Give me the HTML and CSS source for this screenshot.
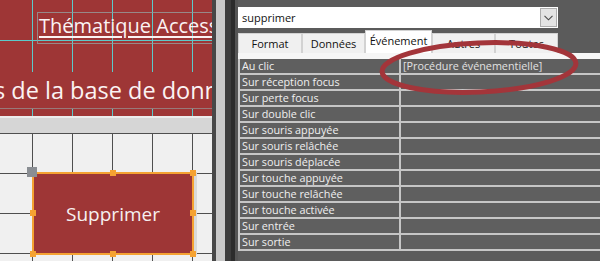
FILE: index.html
```html
<!DOCTYPE html>
<html lang="fr">
<head>
<meta charset="utf-8">
<title>Feuille de propriétés</title>
<link rel="stylesheet" href="styles.css">
</head>
<body>
<div class="app">
  <section class="design">
    <div class="form-header">
      <div class="label label-title"><span class="u">Thématique Access</span></div>
      <div class="label label-sub">s de la base de données</div>
    </div>
    <div class="section-bar"></div>
    <div class="detail">
      <div class="control">
        <div class="btn">Supprimer</div>
        <span class="move-handle"></span>
        <span class="h h-tc"></span><span class="h h-tr"></span>
        <span class="h h-ml"></span><span class="h h-mr"></span>
        <span class="h h-bl"></span><span class="h h-bc"></span><span class="h h-br"></span>
      </div>
    </div>
  </section>

  <div class="splitter">
    <span class="sp sp1"></span><span class="sp sp2"></span><span class="sp sp3"></span><span class="sp sp4"></span><span class="sp sp5"></span>
  </div>

  <section class="props">
    <div class="combo">
      <span class="combo-text">supprimer</span>
      <span class="combo-btn"><svg width="9" height="6" viewBox="0 0 9 6"><path d="M0.5 0.8 L4.5 4.8 L8.5 0.8" fill="none" stroke="#4a4a4a" stroke-width="1.1"/></svg></span>
    </div>
    <div class="tabs">
      <span class="tab t-format">Format</span>
      <span class="tab t-donnees">Données</span>
      <span class="tab t-event active">Événement</span>
      <span class="tab t-autres">Autres</span>
      <span class="tab t-toutes">Toutes</span>
    </div>
    <div class="tab-top"></div>
    <div class="grid">
      <div class="row"><span class="name">Au clic</span><span class="value">[Procédure événementielle]</span></div>
      <div class="row"><span class="name">Sur réception focus</span><span class="value"></span></div>
      <div class="row"><span class="name">Sur perte focus</span><span class="value"></span></div>
      <div class="row"><span class="name">Sur double clic</span><span class="value"></span></div>
      <div class="row"><span class="name">Sur souris appuyée</span><span class="value"></span></div>
      <div class="row"><span class="name">Sur souris relâchée</span><span class="value"></span></div>
      <div class="row"><span class="name">Sur souris déplacée</span><span class="value"></span></div>
      <div class="row"><span class="name">Sur touche appuyée</span><span class="value"></span></div>
      <div class="row"><span class="name">Sur touche relâchée</span><span class="value"></span></div>
      <div class="row"><span class="name">Sur touche activée</span><span class="value"></span></div>
      <div class="row"><span class="name">Sur entrée</span><span class="value"></span></div>
      <div class="row"><span class="name">Sur sortie</span><span class="value"></span></div>
    </div>
    <svg class="mark" width="362" height="120" viewBox="0 0 362 120">
      <ellipse cx="241" cy="67.5" rx="97" ry="24.5" transform="rotate(-2.5 241 67.5)" fill="none" stroke="#a3353a" stroke-width="5"/>
    </svg>
  </section>
</div>
</body>
</html>
```

FILE: styles.css
```css
* { box-sizing: border-box; }

html, body {
  margin: 0;
  padding: 0;
  width: 600px;
  height: 261px;
  overflow: hidden;
  background: #5d5d5d;
  font-family: "Open Sans", "Noto Sans", sans-serif;
}

.app {
  display: flex;
  width: 600px;
  height: 261px;
}

/* ---------- Form design surface ---------- */
.design {
  width: 212px;
  flex: none;
  display: flex;
  flex-direction: column;
  overflow: hidden;
}

.form-header {
  height: 116px;
  flex: none;
  overflow: hidden;
  background-color: #9e3636;
  background-image:
    linear-gradient(#5cc9c9, #5cc9c9),
    linear-gradient(#5cc9c9, #5cc9c9),
    linear-gradient(to right, #5cc9c9 1px, transparent 1px);
  background-size: 100% 1px, 100% 1px, 40px 100%;
  background-position: 0 40px, 0 72px, 32px 0;
  background-repeat: no-repeat, no-repeat, repeat-x;
  display: flex;
  flex-direction: column;
}

.label {
  white-space: nowrap;
  color: #fbf3f3;
}

.label-title {
  margin: 12px 0 0 37px;
  width: 240px;
  height: 32px;
  border: 1px solid rgba(150, 150, 150, 0.85);
  border-right: none;
  font-size: 20px;
  line-height: 25px;
  padding-left: 1px;
}

.label-title .u {
  text-decoration: underline;
  text-decoration-thickness: 1.5px;
  text-underline-offset: 3px;
}

.label-sub {
  margin-top: 28px;
  height: 37px;
  background: #9e3636;
  border-bottom: 1px solid rgba(150, 150, 150, 0.7);
  font-size: 23.5px;
  line-height: 36px;
  text-indent: -6px;
}

.section-bar {
  height: 17px;
  flex: none;
  background: #d6d6d6;
  border-top: 2px solid #ececec;
}

.detail {
  flex: 1;
  position: relative;
  background-color: #f0f0f0;
  background-image:
    linear-gradient(to right, #4f4f4f 1px, transparent 1px),
    linear-gradient(to bottom, #4f4f4f 1px, transparent 1px);
  background-size: 40px 100%, 100% 40px;
  background-position: 32px 0, 0 0;
}

.control {
  position: absolute;
  left: 32px;
  top: 39px;
  width: 162px;
  height: 83px;
}

.btn {
  width: 100%;
  height: 100%;
  background: #9e3636;
  border: 2px solid #f5a232;
  box-shadow: 3px 0 0 #d9d9d9;
  color: #f6f0f0;
  font-size: 19px;
  display: flex;
  align-items: center;
  justify-content: center;
}

.move-handle {
  position: absolute;
  left: -5px;
  top: -5px;
  width: 10px;
  height: 10px;
  background: #8a8e93;
}

.h {
  position: absolute;
  width: 6px;
  height: 6px;
  background: #f5a232;
}
.h-tc { left: 78px; top: -2px; }
.h-tr { right: -2px; top: -2px; }
.h-ml { left: -2px; top: 38px; }
.h-mr { right: -2px; top: 38px; }
.h-bl { left: -2px; bottom: -2px; }
.h-bc { left: 78px; bottom: -2px; }
.h-br { right: -2px; bottom: -2px; }

/* ---------- Splitter ---------- */
.splitter {
  display: flex;
  flex: none;
}
.sp { display: block; height: 100%; }
.sp1 { width: 4px; background: #474747; }
.sp2 { width: 9px; background: #c9c9c9; }
.sp3 { width: 6px; background: #3c3c3c; }
.sp4 { width: 4px; background: #2c2c2c; }
.sp5 { width: 3px; background: #555555; }

/* ---------- Property sheet ---------- */
.props {
  position: relative;
  flex: 1;
  background: #5b5b5b;
  padding-top: 7px;
  display: flex;
  flex-direction: column;
  font-size: 10.8px;
}

.combo {
  width: 320px;
  height: 21px;
  background: #ffffff;
  display: flex;
  align-items: center;
  justify-content: space-between;
  padding: 0 1px 0 4px;
  color: #111;
  font-size: 11px;
}

.combo-btn {
  width: 17px;
  height: 19px;
  background: #e4e4e4;
  border: 1px solid #adadad;
  display: flex;
  align-items: center;
  justify-content: center;
}

.tabs {
  margin-top: 2px;
  height: 23px;
  display: flex;
  align-items: flex-end;
  font-size: 11px;
}

.tab {
  height: 20px;
  background: #f0f0f0;
  border: 1px solid #d2d2d2;
  border-bottom: none;
  color: #111;
  display: flex;
  align-items: center;
  justify-content: center;
  line-height: 1;
}
.t-format { width: 64px; }
.t-donnees { width: 63px; }
.t-event { width: 67px; }
.t-autres { width: 63px; }
.t-toutes { width: 63px; }
.tab.active {
  height: 23px;
  background: #ffffff;
  padding-bottom: 3px;
}

.tab-top {
  height: 6px;
  background: #f6f6f6;
}

.grid {
  border-left: 2px solid #c9c9c9;
}

.row {
  display: grid;
  grid-template-columns: 161px 1fr;
  height: 16px;
  border-bottom: 2px solid #c6c6c6;
  background: #5f5f5f;
  color: #f0f0f0;
  line-height: 14px;
}

.name {
  padding-left: 2px;
  border-right: 2px solid #c6c6c6;
  white-space: nowrap;
  overflow: hidden;
}

.value {
  padding-left: 2px;
  color: #e2e2e2;
  white-space: nowrap;
}

.mark {
  position: absolute;
  left: 0;
  top: 0;
  pointer-events: none;
}
```
